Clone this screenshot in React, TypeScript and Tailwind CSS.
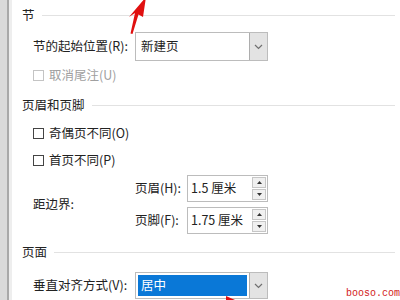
import React from "react";

const font = { fontFamily: '"Noto Sans CJK SC", "Noto Sans", sans-serif' };

function Header({ title, className }: { title: string; className?: string }) {
  return (
    <div className={`flex h-[16px] items-center pr-[5px] ${className ?? ""}`}>
      <span className="text-[12.5px] leading-none text-[#222]">{title}</span>
      <div className="ml-[7px] h-px flex-1 bg-[#e2e2e2]" />
    </div>
  );
}

function Chevron() {
  return (
    <svg width="9" height="6" viewBox="0 0 9 6" fill="none">
      <path d="M1 1l3.5 3.5L8 1" stroke="#707070" strokeWidth="1.2" />
    </svg>
  );
}

function Select({ value, selected, className }: { value: string; selected?: boolean; className?: string }) {
  return (
    <div className={`flex w-[133px] border border-[#bcbcbc] bg-white ${className ?? ""}`}>
      <div className="flex flex-1 items-center p-[2px]">
        <div
          className={`flex h-full w-full items-center pl-[3px] text-[12.5px] ${
            selected ? "bg-[#0a78d7] text-white" : "text-[#222]"
          }`}
        >
          {value}
        </div>
      </div>
      <div className="flex w-[18px] items-center justify-center border-l border-[#adadad] bg-[#e3e3e3]">
        <Chevron />
      </div>
    </div>
  );
}

function Checkbox({ label, disabled, className }: { label: string; disabled?: boolean; className?: string }) {
  return (
    <div className={`flex h-[16px] items-center pl-[11px] ${className ?? ""}`}>
      <div className={`h-[11px] w-[11px] border ${disabled ? "border-[#c4c4c4]" : "border-[#444]"} bg-white`} />
      <span className={`ml-[5px] text-[12.5px] leading-none ${disabled ? "text-[#a0a0a0]" : "text-[#222]"}`}>
        {label}
      </span>
    </div>
  );
}

function Spin({ label, value, className }: { label: string; value: string; className?: string }) {
  return (
    <div className={`flex h-[27px] items-center ${className ?? ""}`}>
      <span className="w-[52px] text-[12.5px] text-[#222]">{label}</span>
      <div className="flex h-full w-[81px] border border-[#bcbcbc] bg-white">
        <div className="flex flex-1 items-center pl-[3px] text-[12.5px] text-[#222]">{value}</div>
        <div className="flex w-[16px] flex-col gap-px bg-white p-px">
          <div className="flex flex-1 items-center justify-center border border-[#c6c6c6] bg-[#f0f0f0]">
            <svg width="5" height="3" viewBox="0 0 5 3"><path d="M0 3h5L2.5 0z" fill="#333" /></svg>
          </div>
          <div className="flex flex-1 items-center justify-center border border-[#c6c6c6] bg-[#f0f0f0]">
            <svg width="5" height="3" viewBox="0 0 5 3"><path d="M0 0h5L2.5 3z" fill="#333" /></svg>
          </div>
        </div>
      </div>
    </div>
  );
}

export default function App() {
  return (
    <div className="relative flex h-[300px] w-[400px] overflow-hidden bg-white" style={font}>
      {/* left edge of the window behind */}
      <div className="w-[7px] bg-[#dadada]" />
      <div className="w-[2px] bg-[#a9a9a9]" />
      <div className="w-[3px] bg-[#eeeeee]" />

      <div className="flex flex-1 flex-col pl-[10px] pt-[7px]">
        <Header title="节" />
        <div className="mt-[9px] flex items-center pl-[11px]">
          <span className="w-[102px] text-[12.5px] text-[#222]">节的起始位置(R):</span>
          <Select value="新建页" className="h-[29px]" />
        </div>
        <Checkbox label="取消尾注(U)" disabled className="mt-[6px]" />

        <Header title="页眉和页脚" className="mt-[14px]" />
        <Checkbox label="奇偶页不同(O)" className="mt-[12px]" />
        <Checkbox label="首页不同(P)" className="mt-[11px]" />

        <div className="mt-[7px] flex items-center pl-[11px]">
          <span className="w-[50px] text-[12.5px] text-[#222]">距边界:</span>
          <div className="ml-[52px] flex flex-col">
            <Spin label="页眉(H):" value="1.5 厘米" />
            <Spin label="页脚(F):" value="1.75 厘米" className="mt-[5px]" />
          </div>
        </div>

        <Header title="页面" className="mt-[10px]" />
        <div className="mt-[12px] flex items-center pl-[11px]">
          <span className="w-[102px] text-[12.5px] text-[#222]">垂直对齐方式(V):</span>
          <Select value="居中" selected className="h-[27px]" />
        </div>
      </div>

      {/* red annotation arrows */}
      <svg className="absolute left-[126px] top-0" width="24" height="36" viewBox="0 0 24 36">
        <path d="M20 -3 L17 17 L12.5 14.5 L6.5 34 L4.5 33.5 L9 13 L3 17 Z" fill="#e01010" />
      </svg>
      <svg className="absolute left-[226px] top-[296px]" width="10" height="4" viewBox="0 0 10 4">
        <path d="M0 0 L9 4 L0 4 Z" fill="#e01010" />
      </svg>

      <span
        className="absolute bottom-[1px] right-0 text-[10px] leading-none text-[#d21a1a]"
        style={{ fontFamily: '"Liberation Mono", monospace' }}
      >
        booso.com
      </span>
    </div>
  );
}
